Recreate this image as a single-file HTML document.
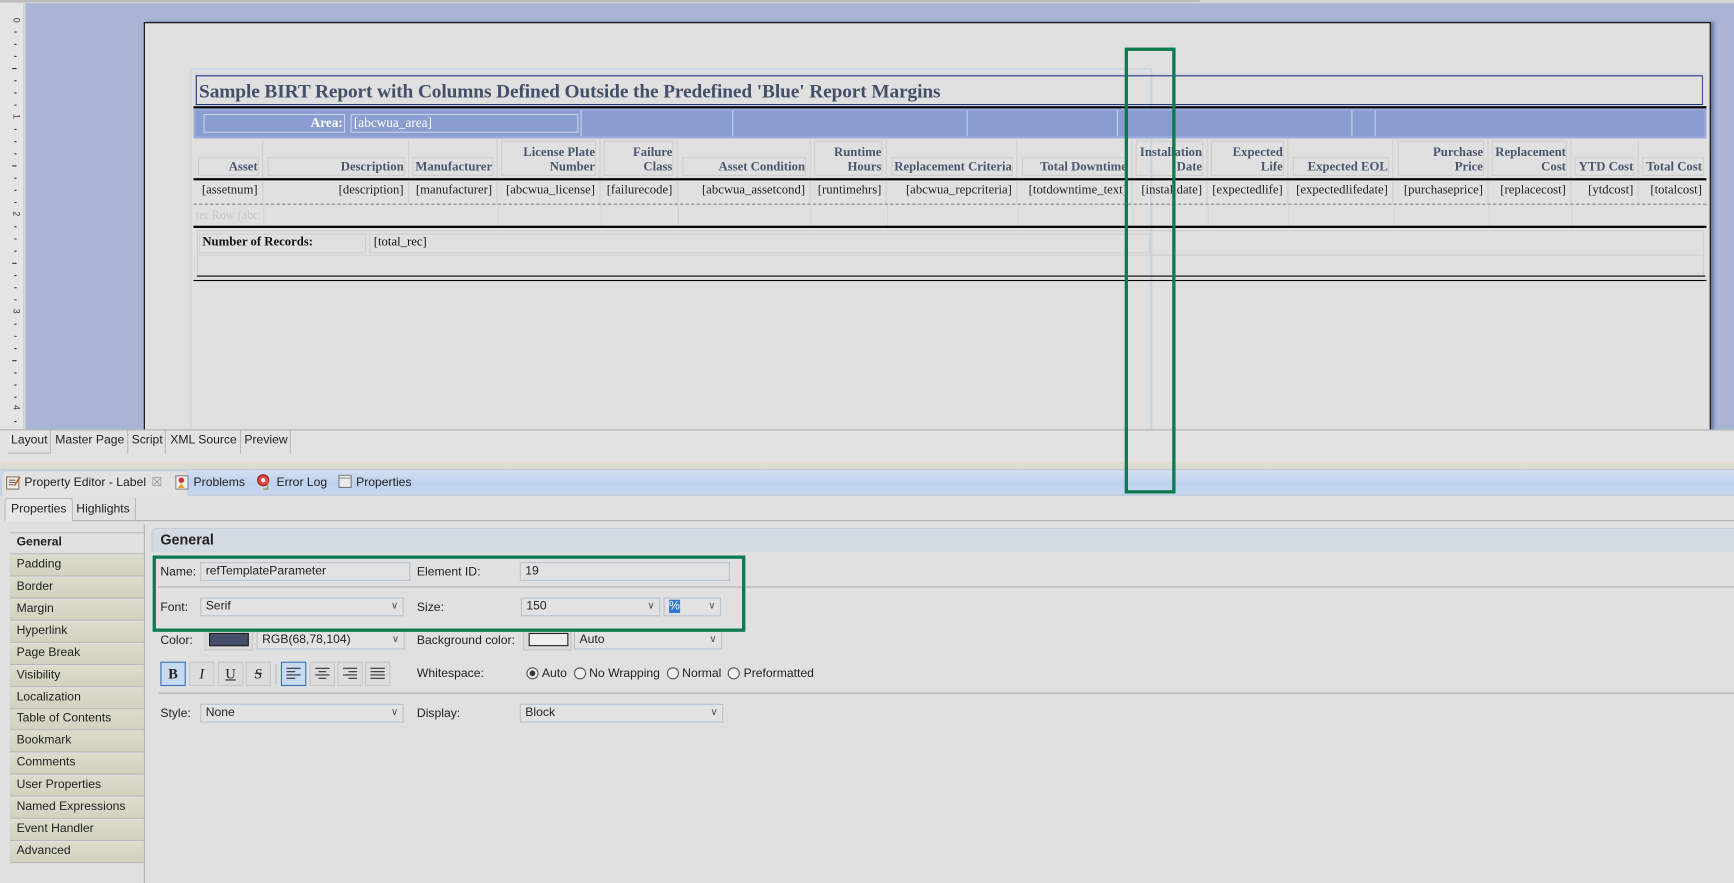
<!DOCTYPE html>
<html><head><meta charset="utf-8"><style>
*{margin:0;padding:0;box-sizing:border-box}
html,body{width:1734px;height:883px;overflow:hidden;background:#e0e0e0}
#w{position:absolute;left:0;top:0;width:1568px;height:798px;transform:scale(1.10587,1.10652);transform-origin:0 0;font-family:"Liberation Sans",sans-serif;font-size:11px;color:#222}
.a{position:absolute}
.s{font-family:"Liberation Serif",serif;color:#44506a;font-size:12px;white-space:nowrap}
.hb{position:absolute;border:1px solid #cfcfcf;height:17px;bottom:2px}
.h{position:absolute;font-family:"Liberation Serif",serif;font-weight:bold;color:#4a5570;font-size:11.5px;line-height:13px;text-align:right;bottom:3px;right:4px;white-space:nowrap}
.v{position:absolute;font-family:"Liberation Serif",serif;color:#222;font-size:11.5px;white-space:nowrap;top:3px;right:4px}
.col{position:absolute;top:0;height:100%}
.si{position:absolute;left:9px;width:121px;height:19px;background:linear-gradient(#dcdccc,#d2d2c0);border-bottom:1px solid #b8b8b0;padding:2px 0 0 6px;font-size:11px;color:#222}
.inp{position:absolute;height:17px;border:1px solid #b8c4d0;background:#e2e2e2;padding:1px 4px;font-size:11px}
.dd::after{content:"\2228";position:absolute;right:4px;top:1px;font-size:9px;color:#555}
.btn{position:absolute;top:598px;width:23px;height:22px;border:1px solid #c8c8c8;background:#dcdcdc;text-align:center;font-family:"Liberation Serif",serif;font-size:13px;line-height:20px}
.rad{display:inline-block;width:11px;height:11px;border:1px solid #555;border-radius:50%;vertical-align:-2px;margin-right:3px;background:#f0f0f0}
</style></head><body><div id="w">
<div class="a" style="left:0;top:0;width:1568px;height:3px;background:#d4d4d4"></div>
<div class="a" style="left:0;top:0;width:1085px;height:2px;background:#bcbcbc"></div>
<div class="a" style="left:0;top:3px;width:22px;height:385px;background:#e4e4e4;border-right:1px solid #c8c8c8"></div>
<svg class="a" style="left:0;top:0" width="22" height="388">
<g stroke="#333" stroke-width="1">
<path d="M13 29h2M13 40h2M13 51h2M13 73h2M13 84h2M13 95h2M13 117h2M13 128h2M13 139h2M13 161h2M13 172h2M13 183h2M13 205h2M13 216h2M13 227h2M13 249h2M13 260h2M13 271h2M13 293h2M13 304h2M13 315h2M13 337h2M13 348h2M13 359h2M13 381h2"/>
<path d="M11 62h4M11 150h4M11 238h4M11 326h4"/>
</g>
<g font-size="8" font-family="Liberation Sans" fill="#333">
<text transform="translate(12,16) rotate(90)">0</text>
<text transform="translate(12,103) rotate(90)" fill="#702070">1</text>
<text transform="translate(12,191) rotate(90)">2</text>
<text transform="translate(12,279) rotate(90)">3</text>
<text transform="translate(12,366) rotate(90)">4</text>
</g>
</svg>
<div class="a" style="left:23px;top:3px;width:1545px;height:385px;background:#aab5d5"></div>
<div class="a" style="left:130px;top:20px;width:1417px;height:369px;background:#e0e0e0;border:1px solid #000;border-bottom:none;box-shadow:3px 0 3px #6878a8"></div>
<div class="a" style="left:172px;top:62px;width:870px;height:327px;border:1px solid #c0d4e8;border-bottom:none"></div>
<div class="a" style="left:1040px;top:62px;width:1px;height:327px;background:#c0d4e8"></div>
<div class="a" style="left:175px;top:66px;width:1368px;height:1px;background:#cfd8e4"></div>
<div class="a" style="left:177px;top:68px;width:1363px;height:27px;border:1px solid #1f3580;border-right-color:#4050a0"></div>
<div class="a s" style="left:180px;top:72px;font-size:17.5px;font-weight:bold;letter-spacing:-0.1px">Sample BIRT Report with Columns Defined Outside the Predefined 'Blue' Report Margins</div>
<div class="a" style="left:175px;top:96px;width:1368px;height:2px;background:#000"></div>
<div class="a" style="left:175px;top:98px;width:1368px;height:27px;background:#8a9dd1;border:2px solid #9aaadb"></div>
<div class="a" style="left:184px;top:103px;width:128px;height:17px;border:1px solid #c8d0ea"></div>
<div class="a" style="left:317px;top:103px;width:206px;height:17px;border:1px solid #c8d0ea"></div>
<div class="a s" style="left:230px;top:104px;width:80px;text-align:right;color:#fff;font-weight:bold;font-size:12px">Area:</div>
<div class="a s" style="left:320px;top:104px;color:#fff;font-size:12px">[abcwua_area]</div>
<div class="a" style="left:525px;top:100px;width:1px;height:23px;background:#c8d0ea"></div>
<div class="a" style="left:662px;top:100px;width:1px;height:23px;background:#c8d0ea"></div>
<div class="a" style="left:874px;top:100px;width:1px;height:23px;background:#c8d0ea"></div>
<div class="a" style="left:1010px;top:100px;width:1px;height:23px;background:#c8d0ea"></div>
<div class="a" style="left:1222px;top:100px;width:1px;height:23px;background:#c8d0ea"></div>
<div class="a" style="left:1243px;top:100px;width:1px;height:23px;background:#c8d0ea"></div>
<div class="a" style="left:175px;top:126px;width:1368px;height:35px">
<div class="col" style="left:0;width:63px;border-right:1px solid #d0d0d0"><div class="hb" style="left:4px;right:3px"></div><div class="h">Asset</div></div>
<div class="col" style="left:63px;width:132px;border-right:1px solid #d0d0d0"><div class="hb" style="left:4px;right:3px"></div><div class="h">Description</div></div>
<div class="col" style="left:195px;width:80px;border-right:1px solid #d0d0d0"><div class="hb" style="left:3px;right:3px"></div><div class="h">Manufacturer</div></div>
<div class="col" style="left:275px;width:93px;border-right:1px solid #d0d0d0"><div class="hb" style="left:3px;right:3px;height:32px"></div><div class="h">License Plate<br>Number</div></div>
<div class="col" style="left:368px;width:70px;border-right:1px solid #d0d0d0"><div class="hb" style="left:3px;right:3px;height:32px"></div><div class="h">Failure<br>Class</div></div>
<div class="col" style="left:438px;width:120px;border-right:1px solid #d0d0d0"><div class="hb" style="left:4px;right:3px"></div><div class="h">Asset Condition</div></div>
<div class="col" style="left:558px;width:69px;border-right:1px solid #d0d0d0"><div class="hb" style="left:3px;right:3px;height:32px"></div><div class="h">Runtime<br>Hours</div></div>
<div class="col" style="left:627px;width:118px;border-right:1px solid #d0d0d0"><div class="hb" style="left:4px;right:3px"></div><div class="h">Replacement Criteria</div></div>
<div class="col" style="left:745px;width:104px;border-right:1px solid #d0d0d0"><div class="hb" style="left:4px;right:3px"></div><div class="h" style="right:4px">Total Downtime</div></div>
<div class="col" style="left:849px;width:68px;border-right:1px solid #d0d0d0"><div class="hb" style="left:3px;right:3px;height:32px"></div><div class="h">Installation<br>Date</div></div>
<div class="col" style="left:917px;width:73px;border-right:1px solid #d0d0d0"><div class="hb" style="left:3px;right:3px;height:32px"></div><div class="h">Expected<br>Life</div></div>
<div class="col" style="left:990px;width:95px;border-right:1px solid #d0d0d0"><div class="hb" style="left:4px;right:3px"></div><div class="h">Expected EOL</div></div>
<div class="col" style="left:1085px;width:86px;border-right:1px solid #d0d0d0"><div class="hb" style="left:4px;right:3px;height:32px"></div><div class="h">Purchase<br>Price</div></div>
<div class="col" style="left:1171px;width:75px;border-right:1px solid #d0d0d0"><div class="hb" style="left:3px;right:3px;height:32px"></div><div class="h">Replacement<br>Cost</div></div>
<div class="col" style="left:1246px;width:61px;border-right:1px solid #d0d0d0"><div class="hb" style="left:3px;right:3px"></div><div class="h">YTD Cost</div></div>
<div class="col" style="left:1307px;width:61px"><div class="hb" style="left:3px;right:2px"></div><div class="h">Total Cost</div></div>
</div>
<div class="a" style="left:175px;top:161px;width:1368px;height:2px;background:#000"></div>
<div class="a" style="left:175px;top:163px;width:1368px;height:21px">
<div class="col" style="left:0;width:63px;border-right:1px solid #d0d0d0"><div class="v">[assetnum]</div></div>
<div class="col" style="left:63px;width:132px;border-right:1px solid #d0d0d0"><div class="v">[description]</div></div>
<div class="col" style="left:195px;width:80px;border-right:1px solid #d0d0d0"><div class="v">[manufacturer]</div></div>
<div class="col" style="left:275px;width:93px;border-right:1px solid #d0d0d0"><div class="v">[abcwua_license]</div></div>
<div class="col" style="left:368px;width:70px;border-right:1px solid #d0d0d0"><div class="v">[failurecode]</div></div>
<div class="col" style="left:438px;width:120px;border-right:1px solid #d0d0d0"><div class="v">[abcwua_assetcond]</div></div>
<div class="col" style="left:558px;width:69px;border-right:1px solid #d0d0d0"><div class="v">[runtimehrs]</div></div>
<div class="col" style="left:627px;width:118px;border-right:1px solid #d0d0d0"><div class="v">[abcwua_repcriteria]</div></div>
<div class="col" style="left:745px;width:104px;border-right:1px solid #d0d0d0"><div class="v">[totdowntime_text]</div></div>
<div class="col" style="left:849px;width:68px;border-right:1px solid #d0d0d0"><div class="v">[installdate]</div></div>
<div class="col" style="left:917px;width:73px;border-right:1px solid #d0d0d0"><div class="v">[expectedlife]</div></div>
<div class="col" style="left:990px;width:95px;border-right:1px solid #d0d0d0"><div class="v">[expectedlifedate]</div></div>
<div class="col" style="left:1085px;width:86px;border-right:1px solid #d0d0d0"><div class="v">[purchaseprice]</div></div>
<div class="col" style="left:1171px;width:75px;border-right:1px solid #d0d0d0"><div class="v">[replacecost]</div></div>
<div class="col" style="left:1246px;width:61px;border-right:1px solid #d0d0d0"><div class="v">[ytdcost]</div></div>
<div class="col" style="left:1307px;width:61px"><div class="v">[totalcost]</div></div>
</div>
<div class="a" style="left:175px;top:184px;width:1368px;border-top:1px dashed #888"></div>
<div class="a" style="left:175px;top:185px;width:1368px;height:19px">
<div class="col" style="left:63px;border-left:1px solid #d4d4d4"></div><div class="col" style="left:275px;border-left:1px solid #d4d4d4"></div><div class="col" style="left:368px;border-left:1px solid #d4d4d4"></div><div class="col" style="left:438px;border-left:1px solid #d4d4d4"></div><div class="col" style="left:558px;border-left:1px solid #d4d4d4"></div><div class="col" style="left:627px;border-left:1px solid #d4d4d4"></div><div class="col" style="left:745px;border-left:1px solid #d4d4d4"></div><div class="col" style="left:849px;border-left:1px solid #d4d4d4"></div><div class="col" style="left:917px;border-left:1px solid #d4d4d4"></div><div class="col" style="left:990px;border-left:1px solid #d4d4d4"></div><div class="col" style="left:1085px;border-left:1px solid #d4d4d4"></div><div class="col" style="left:1171px;border-left:1px solid #d4d4d4"></div><div class="col" style="left:1246px;border-left:1px solid #d4d4d4"></div>
<div class="a" style="left:2px;top:4px;width:60px;overflow:hidden;font-family:'Liberation Serif',serif;font-size:11px;color:#c8c8c8;white-space:nowrap">ter Row (abc</div>
</div>
<div class="a" style="left:175px;top:204px;width:1368px;height:2px;background:#000"></div>
<div class="a" style="left:178px;top:208px;width:1363px;height:42px;border:1px solid #d0d0d0"></div>
<div class="a" style="left:180px;top:211px;width:151px;height:18px;border:1px solid #d0d0d0"></div>
<div class="a" style="left:334px;top:211px;width:706px;height:18px;border:1px solid #d0d0d0"></div>
<div class="a" style="left:178px;top:230px;width:1363px;height:1px;background:#d0d0d0"></div>
<div class="a s" style="left:183px;top:213px;color:#111;font-weight:bold;font-size:11.5px">Number of Records:</div>
<div class="a s" style="left:338px;top:213px;color:#111;font-size:11.5px">[total_rec]</div>
<div class="a" style="left:178px;top:249px;width:1364px;height:1px;background:#000"></div>
<div class="a" style="left:175px;top:253px;width:1368px;height:1px;background:#000"></div>
<div class="a" style="left:0;top:388px;width:1568px;height:1px;background:#b0b0b0"></div>
<div class="a" style="left:0;top:389px;width:1568px;height:28px;background:#e2e2e2"></div>
<div class="a" style="left:7px;top:389px;width:39px;height:21px;background:#e4e4e4;border-right:1px solid #bbb;border-bottom:1px solid #bbb"></div>
<div class="a" style="left:10px;top:392px;font-size:11px">Layout</div>
<div class="a" style="left:46px;top:389px;width:70px;height:21px;border-right:1px solid #bbb"></div>
<div class="a" style="left:50px;top:392px;font-size:11px">Master Page</div>
<div class="a" style="left:116px;top:389px;width:34px;height:21px;border-right:1px solid #bbb"></div>
<div class="a" style="left:119px;top:392px;font-size:11px">Script</div>
<div class="a" style="left:150px;top:389px;width:68px;height:21px;border-right:1px solid #bbb"></div>
<div class="a" style="left:154px;top:392px;font-size:11px">XML Source</div>
<div class="a" style="left:218px;top:389px;width:45px;height:21px;border-right:1px solid #bbb"></div>
<div class="a" style="left:221px;top:392px;font-size:11px">Preview</div>
<div class="a" style="left:0;top:417px;width:1568px;height:7px;background:#dedcd0"></div>
<div class="a" style="left:0;top:424px;width:1568px;height:24px;background:linear-gradient(#d4e0f0,#bed2ee 50%,#c6d6ee);border-top:1px solid #b8c8dc;border-bottom:1px solid #b8c8dc"></div>
<div class="a" style="left:1px;top:425px;width:169px;height:24px;background:#e2e2e2;border-radius:4px 4px 0 0;border:1px solid #c8d0dc;border-bottom:none"></div>
<svg class="a" style="left:5px;top:429px" width="14" height="14"><rect x="1" y="2" width="11" height="11" fill="#f4f0e4" stroke="#8a7a5a"/><path d="M3 5h6M3 7h6M3 9h4" stroke="#666"/><path d="M8 10l5-8" stroke="#c06030" stroke-width="1.5"/></svg>
<div class="a" style="left:22px;top:430px;font-size:11px">Property Editor - Label</div>
<div class="a" style="left:137px;top:429px;font-size:11px;color:#888">☒</div>
<svg class="a" style="left:158px;top:429px" width="14" height="14"><rect x="1" y="1" width="11" height="12" fill="#f0f0f0" stroke="#888"/><circle cx="6" cy="5" r="2.5" fill="#d03030"/><path d="M3 12l3-4 3 4z" fill="#e0a020"/></svg>
<div class="a" style="left:175px;top:430px;font-size:11px">Problems</div>
<svg class="a" style="left:232px;top:428px" width="14" height="15"><circle cx="6" cy="6" r="5" fill="#e04040" stroke="#a02020"/><circle cx="6" cy="6" r="2" fill="#fff"/><path d="M10 6v8H6" stroke="#a08040" fill="none"/></svg>
<div class="a" style="left:250px;top:430px;font-size:11px">Error Log</div>
<svg class="a" style="left:306px;top:429px" width="13" height="13"><rect x="0.5" y="0.5" width="11" height="11" fill="#eaeaea" stroke="#777"/><path d="M1 3h10" stroke="#999"/></svg>
<div class="a" style="left:322px;top:430px;font-size:11px">Properties</div>
<div class="a" style="left:4px;top:450px;width:62px;height:21px;background:#e6e6e6;border:1px solid #bbb;border-bottom:none;border-radius:3px 3px 0 0"></div>
<div class="a" style="left:10px;top:454px;font-size:11px">Properties</div>
<div class="a" style="left:66px;top:450px;width:57px;height:20px;border-right:1px solid #bbb"></div>
<div class="a" style="left:69px;top:454px;font-size:11px">Highlights</div>
<div class="a" style="left:66px;top:470px;width:1502px;height:1px;background:#b0b0b0"></div>
<div class="a" style="left:9px;top:474px;width:121px;height:8px;border-bottom:1px solid #b8b8b8"></div>
<div class="a" style="left:130px;top:474px;width:1px;height:324px;background:#b0b0b0"></div>
<div class="si" style="top:482px;background:#e0e0e0;font-weight:bold;border-bottom:1px solid #b8b8b8">General</div>
<div class="si" style="top:502px">Padding</div>
<div class="si" style="top:522px">Border</div>
<div class="si" style="top:542px">Margin</div>
<div class="si" style="top:562px">Hyperlink</div>
<div class="si" style="top:582px">Page Break</div>
<div class="si" style="top:602px">Visibility</div>
<div class="si" style="top:622px">Localization</div>
<div class="si" style="top:641px">Table of Contents</div>
<div class="si" style="top:661px">Bookmark</div>
<div class="si" style="top:681px">Comments</div>
<div class="si" style="top:701px">User Properties</div>
<div class="si" style="top:721px">Named Expressions</div>
<div class="si" style="top:741px">Event Handler</div>
<div class="si" style="top:761px">Advanced</div>
<div class="a" style="left:137px;top:477px;width:1431px;height:22px;background:#d4dae2;border-top:1px solid #c4ccd8;border-left:1px solid #c4ccd8;border-radius:4px 0 0 0"></div>
<div class="a" style="left:145px;top:480px;font-size:13px;font-weight:bold;color:#222">General</div>
<div class="a" style="left:143px;top:530px;width:1425px;height:1px;background:#b0b0b0"></div>
<div class="a" style="left:145px;top:511px">Name:</div>
<div class="inp" style="left:181px;top:508px;width:190px">refTemplateParameter</div>
<div class="a" style="left:377px;top:511px">Element ID:</div>
<div class="inp" style="left:470px;top:508px;width:190px">19</div>
<div class="a" style="left:145px;top:543px">Font:</div>
<div class="inp dd" style="left:181px;top:540px;width:184px">Serif</div>
<div class="a" style="left:377px;top:543px">Size:</div>
<div class="inp dd" style="left:471px;top:540px;width:126px">150</div>
<div class="inp dd" style="left:600px;top:540px;width:52px"><span style="background:#3078d8;color:#fff">%</span></div>
<div class="a" style="left:145px;top:573px">Color:</div>
<div class="a" style="left:185px;top:568px;width:44px;height:20px;border:1px solid #c8c8c8;background:#dadada"></div>
<div class="a" style="left:189px;top:572px;width:36px;height:12px;background:#444e68;border:1px solid #222"></div>
<div class="inp dd" style="left:232px;top:570px;width:134px">RGB(68,78,104)</div>
<div class="a" style="left:377px;top:573px">Background color:</div>
<div class="a" style="left:473px;top:568px;width:44px;height:20px;border:1px solid #c8c8c8;background:#dadada"></div>
<div class="a" style="left:478px;top:572px;width:36px;height:12px;background:#eee;border:1px solid #222"></div>
<div class="inp dd" style="left:519px;top:570px;width:134px">Auto</div>
<div class="btn" style="left:145px;border-color:#3a70b0;background:#c8daf0;font-weight:bold">B</div>
<div class="btn" style="left:171px;font-style:italic">I</div>
<div class="btn" style="left:197px;text-decoration:underline">U</div>
<div class="btn" style="left:222px;text-decoration:line-through;font-style:italic">S</div>
<div class="a" style="left:249px;top:600px;width:1px;height:18px;background:#bbb"></div>
<div class="btn" style="left:254px;border-color:#3a70b0;background:#c8daf0"><svg width="13" height="12" style="margin-top:4px"><path d="M0 1h13M0 4h8M0 7h13M0 10h8" stroke="#333"/></svg></div>
<div class="btn" style="left:280px"><svg width="13" height="12" style="margin-top:4px"><path d="M0 1h13M3 4h7M0 7h13M3 10h7" stroke="#333"/></svg></div>
<div class="btn" style="left:305px"><svg width="13" height="12" style="margin-top:4px"><path d="M0 1h13M5 4h8M0 7h13M5 10h8" stroke="#333"/></svg></div>
<div class="btn" style="left:330px"><svg width="13" height="12" style="margin-top:4px"><path d="M0 1h13M0 4h13M0 7h13M0 10h13" stroke="#333"/></svg></div>
<div class="a" style="left:377px;top:603px">Whitespace:</div>
<div class="a" style="left:476px;top:603px;white-space:nowrap"><span class="rad" style="background:radial-gradient(#333 35%,#f0f0f0 45%)"></span>Auto &nbsp;<span class="rad"></span>No Wrapping &nbsp;<span class="rad"></span>Normal &nbsp;<span class="rad"></span>Preformatted</div>
<div class="a" style="left:143px;top:626px;width:1425px;height:1px;background:#b0b0b0"></div>
<div class="a" style="left:145px;top:639px">Style:</div>
<div class="inp dd" style="left:181px;top:636px;width:184px">None</div>
<div class="a" style="left:377px;top:639px">Display:</div>
<div class="inp dd" style="left:470px;top:636px;width:184px">Block</div>
<div class="a" style="left:1017px;top:43px;width:46px;height:403px;border:3px solid #0e7a50"></div>
<div class="a" style="left:138px;top:502px;width:536px;height:69px;border:3px solid #0e7a50"></div>
</div></body></html>
